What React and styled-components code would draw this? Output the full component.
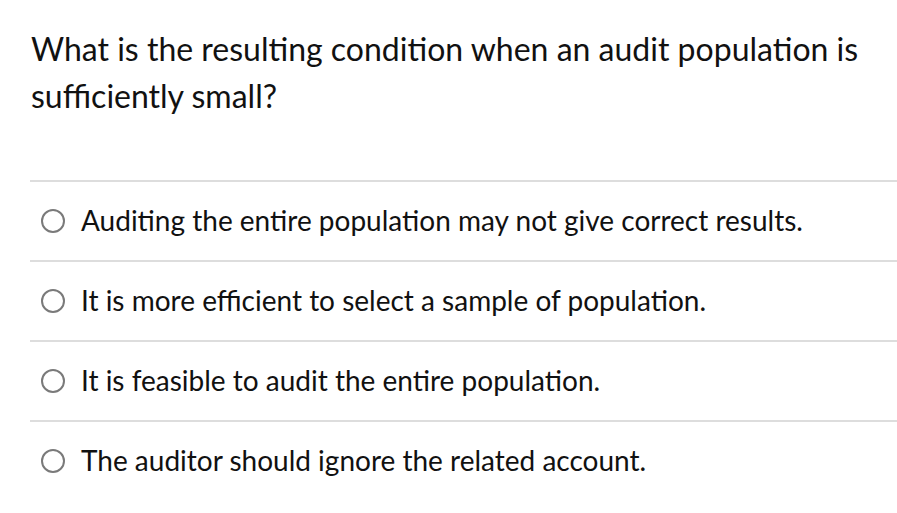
import React from 'react';
import styled, { createGlobalStyle } from 'styled-components';

const GlobalStyle = createGlobalStyle`
	html, body {
		margin: 0;
		padding: 0;
		background: #ffffff;
	}
	body {
		font-family: Lato, 'Open Sans', sans-serif;
		color: #111111;
	}
`;

const QuestionWrapper = styled.div`
	display: flex;
	flex-direction: column;
	padding: 25px 0 0 30px;
	width: 897px;
	box-sizing: border-box;
`;

const QuestionText = styled.div`
	font-size: 32px;
	line-height: 47px;
	padding-left: 1px;
	margin-bottom: 61px;
`;

const AnswerList = styled.div`
	display: flex;
	flex-direction: column;
`;

const AnswerRow = styled.label`
	display: flex;
	align-items: center;
	height: 80px;
	box-sizing: border-box;
	border-top: 2px solid #dddddd;
	padding-left: 11px;
	cursor: pointer;
`;

const Radio = styled.span`
	width: 24px;
	height: 24px;
	box-sizing: border-box;
	border-radius: 50%;
	border: 2px solid #7a7a7a;
	flex-shrink: 0;
`;

const AnswerText = styled.span`
	font-size: 28px;
	line-height: 1.2;
	margin-left: 16px;
`;

const answers = [
	'Auditing the entire population may not give correct results.',
	'It is more efficient to select a sample of population.',
	'It is feasible to audit the entire population.',
	'The auditor should ignore the related account.',
];

const App = () => {
	return (
		<>
			<GlobalStyle />
			<QuestionWrapper>
				<QuestionText>
					What is the resulting condition when an audit population is
					sufficiently small?
				</QuestionText>
				<AnswerList>
					{answers.map((answer, id) => (
						<AnswerRow key={id}>
							<Radio />
							<AnswerText>{answer}</AnswerText>
						</AnswerRow>
					))}
				</AnswerList>
			</QuestionWrapper>
		</>
	);
};

export default App;
